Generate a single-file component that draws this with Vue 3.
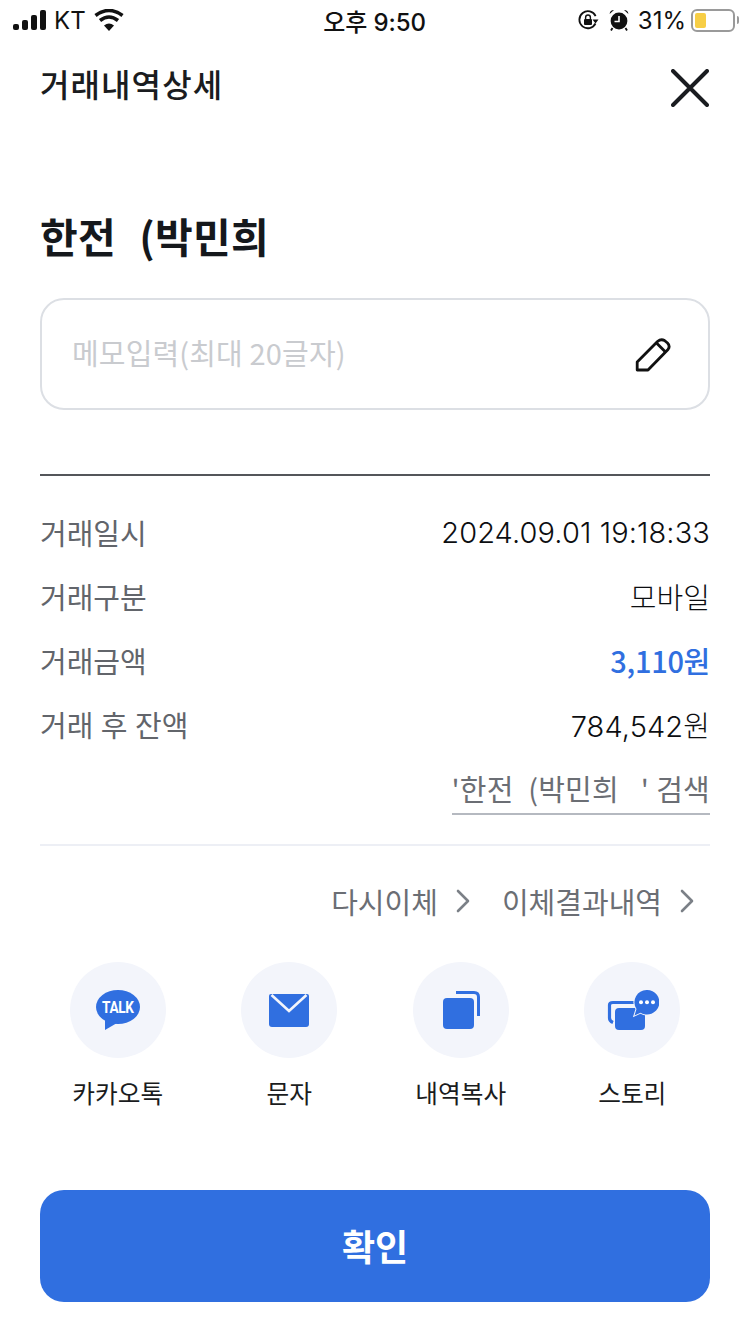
<template>
  <div class="page">
    <div class="status-bar">
      <div class="status-left">
        <svg class="signal" width="34" height="20" viewBox="0 0 34 20">
          <rect x="0" y="14" width="6" height="6" rx="2" />
          <rect x="9" y="10" width="6" height="10" rx="2" />
          <rect x="18" y="5" width="6" height="15" rx="2" />
          <rect x="27" y="0" width="6" height="20" rx="2" />
        </svg>
        <span class="carrier">KT</span>
        <svg class="wifi" width="30" height="22" viewBox="0 0 30 22">
          <path d="M15 22 L10 16.5 Q15 12.5 20 16.5 Z" />
          <path class="wifi-arc" d="M6 11.5 Q15 4.5 24 11.5" />
          <path class="wifi-arc" d="M1.5 6.5 Q15 -3.5 28.5 6.5" />
        </svg>
      </div>
      <div class="status-time">오후 9:50</div>
      <div class="status-right">
        <svg class="rotate-lock" width="22" height="22" viewBox="0 0 22 22">
          <path d="M18.5 14.5 A8.5 8.5 0 1 1 18.6 7.2" fill="none" stroke="#111" stroke-width="1.8" />
          <path d="M15.5 10.5 L21.5 10.5 L18.5 14.5 Z" fill="#111" />
          <rect x="7" y="10" width="8" height="6" rx="1" fill="#111" />
          <path d="M8.6 10 V8.4 A2.4 2.4 0 0 1 13.4 8.4 V10" fill="none" stroke="#111" stroke-width="1.4" />
        </svg>
        <svg class="alarm" width="20" height="22" viewBox="0 0 20 22">
          <circle cx="10" cy="12" r="8.4" fill="#111" />
          <path d="M10 7 V12.5 H5.5" fill="none" stroke="#fff" stroke-width="1.6" />
          <path d="M0.6 5 Q1 1 5 1 Z M19.4 5 Q19 1 15 1 Z" fill="#111" />
          <path d="M3.5 19 L2 21.5 M16.5 19 L18 21.5" stroke="#111" stroke-width="1.8" />
        </svg>
        <span class="battery-text">31%</span>
        <div class="battery">
          <div class="battery-level" :style="{ width: batteryLevel + 'px' }"></div>
        </div>
        <div class="battery-cap"></div>
      </div>
    </div>

    <header class="header">
      <h1 class="header-title">거래내역상세</h1>
      <svg class="close" width="38" height="38" viewBox="0 0 38 38">
        <path d="M2 2 L36 36 M36 2 L2 36" fill="none" stroke="#1a1c20" stroke-width="4" stroke-linecap="round" />
      </svg>
    </header>

    <main class="content">
      <h2 class="name">{{ name }}</h2>

      <div class="memo">
        <span class="memo-placeholder">메모입력(최대 20글자)</span>
        <svg width="38" height="38" viewBox="-2 -2.5 38 38">
          <path d="M1.2 24.5 L21.5 4 Q25 1 28.5 3 L31.5 5.5 Q34.5 8.5 32 12 L12 32.5 L1.2 32.5 Z" fill="none" stroke="#111" stroke-width="2.8" stroke-linejoin="round" />
          <path d="M20.5 5.5 L29.5 14.5" fill="none" stroke="#111" stroke-width="2.8" />
        </svg>
      </div>

      <div class="details">
        <div v-for="row in rows" :key="row.label" class="detail-row">
          <span class="detail-label">{{ row.label }}</span>
          <span class="detail-value" :class="{ 'detail-value--blue': row.blue }">{{ row.value }}</span>
        </div>
        <div class="search-row">
          <span class="search-link">'{{ name }}&nbsp;&nbsp; ' 검색</span>
        </div>
      </div>

      <div class="links">
        <span v-for="link in links" :key="link" class="link">
          {{ link }}
          <svg width="14" height="24" viewBox="0 0 14 24">
            <path d="M2 2 L12 12 L2 22" fill="none" stroke="#7b8087" stroke-width="2.6" stroke-linecap="round" stroke-linejoin="round" />
          </svg>
        </span>
      </div>

      <div class="shares">
        <div class="share">
          <div class="share-circle">
            <svg width="44" height="40" viewBox="0 0 44 40">
              <ellipse cx="22" cy="17" rx="22" ry="17" fill="#306fe0" />
              <path d="M9 26 L9 40 L21 33 Z" fill="#306fe0" />
              <text transform="translate(6 22.8) scale(0.8 1)" class="talk">TALK</text>
            </svg>
          </div>
          <span class="share-label">카카오톡</span>
        </div>
        <div class="share">
          <div class="share-circle">
            <svg width="40" height="33" viewBox="0 0 40 33">
              <path d="M2 0 H38 Q40 0 40 2 V30 Q40 33 37 33 H3 Q0 33 0 30 V2 Q0 0 2 0 Z" fill="#306fe0" />
              <path d="M2.5 1 L20 17 L37.5 1" fill="none" stroke="#f3f5fb" stroke-width="2.6" />
            </svg>
          </div>
          <span class="share-label">문자</span>
        </div>
        <div class="share">
          <div class="share-circle">
            <svg width="38" height="38" viewBox="-1 0 38 38">
              <rect x="0" y="7" width="31" height="31" rx="4" fill="#306fe0" />
              <path d="M13 1.5 H31 Q35.5 1.5 35.5 6 V25" fill="none" stroke="#306fe0" stroke-width="3" />
            </svg>
          </div>
          <span class="share-label">내역복사</span>
        </div>
        <div class="share">
          <div class="share-circle">
            <svg width="54" height="40" viewBox="-3 0 54 40">
              <path d="M5 32.5 Q1.5 31 1.5 28 V15 Q1.5 12.5 5 12.5 H26" fill="none" stroke="#306fe0" stroke-width="3.2" />
              <path d="M7 22 Q7 18 11 18 H33 Q37 18 37 22 V36 Q37 40 33 40 H11 Q7 40 7 36 Z" fill="#306fe0" />
              <path d="M39 0 A12.3 12.3 0 1 1 32.5 22.7 L26.5 25.5 L28.5 19 A12.3 12.3 0 0 1 39 0 Z" fill="#306fe0" stroke="#f3f5fb" stroke-width="2" paint-order="stroke" />
              <circle cx="33" cy="12.3" r="2" fill="#fff" />
              <circle cx="39" cy="12.3" r="2" fill="#fff" />
              <circle cx="45" cy="12.3" r="2" fill="#fff" />
            </svg>
          </div>
          <span class="share-label">스토리</span>
        </div>
      </div>

      <button class="confirm" type="button">확인</button>
    </main>
  </div>
</template>

<script setup>
const batteryLevel = 11;
const name = "한전\u00a0\u00a0(박민희";

const rows = [
  { label: "거래일시", value: "2024.09.01 19:18:33" },
  { label: "거래구분", value: "모바일" },
  { label: "거래금액", value: "3,110원", blue: true },
  { label: "거래 후 잔액", value: "784,542원" },
];

const links = ["다시이체", "이체결과내역"];
</script>

<style>
html,
body {
  background: #fff;
}
</style>

<style scoped>
.page {
  width: 750px;
  height: 1334px;
  overflow: hidden;
  background: #fff;
  font-family: "Noto Sans CJK KR", "Noto Sans", sans-serif;
  color: #1a1c20;
}

/* status bar */
.status-bar {
  height: 40px;
  display: grid;
  grid-template-columns: 1fr auto 1fr;
  align-items: center;
  padding: 0 11px 0 13px;
}

.status-left {
  display: flex;
  align-items: center;
  gap: 7px;
}

.signal {
  fill: #111;
}

.carrier {
  font-family: Inter, sans-serif;
  font-size: 24px;
  color: #111;
}

.wifi {
  margin-left: 1px;
  fill: #111;
}

.wifi-arc {
  fill: none;
  stroke: #111;
  stroke-width: 3.6;
}

.status-time {
  margin-left: -3px;
  font-family: Inter, "Noto Sans CJK KR", sans-serif;
  font-size: 24px;
  font-weight: 550;
  letter-spacing: -0.1px;
  color: #111;
}

.status-right {
  display: flex;
  align-items: center;
  justify-content: flex-end;
  gap: 8px;
}

.rotate-lock {
  margin-right: 2px;
}

.battery-text {
  margin-left: 1px;
  font-family: Inter, sans-serif;
  font-size: 24px;
  color: #111;
}

.battery {
  width: 44px;
  height: 23px;
  box-sizing: border-box;
  border: 2px solid #9a9a9a;
  border-radius: 6px;
  padding: 2px;
  margin-left: -3px;
}

.battery-level {
  height: 100%;
  background: #f7ce46;
  border-radius: 2px;
}

.battery-cap {
  width: 2px;
  height: 8px;
  margin-left: -6px;
  background: #9a9a9a;
  border-radius: 0 2px 2px 0;
}

/* header */
.header {
  height: 90px;
  padding: 0 40px;
  display: flex;
  align-items: flex-start;
  justify-content: space-between;
}

.header-title {
  margin: 15px 0 0;
  font-size: 32px;
  font-weight: 500;
  line-height: 56px;
  letter-spacing: 1.1px;
  color: #1a1c20;
}

.close {
  margin-top: 29px;
  margin-right: 1px;
}

/* content */
.content {
  padding: 0 40px;
}

.name {
  margin: 69px 0 0;
  font-size: 41px;
  font-weight: 700;
  line-height: 72px;
  letter-spacing: 0.3px;
  word-spacing: 2px;
  color: #15181c;
}

.memo {
  margin-top: 27px;
  height: 112px;
  box-sizing: border-box;
  border: 2px solid #dcdfe4;
  border-radius: 24px;
  display: flex;
  align-items: center;
  justify-content: space-between;
  padding: 0 36px 0 30px;
}

.memo-placeholder {
  position: relative;
  top: -2px;
  font-size: 29px;
  letter-spacing: 0.15px;
  color: #c9cbcf;
}

.details {
  margin-top: 64px;
  border-top: 2px solid #54565a;
  padding-top: 24px;
  border-bottom: 2px solid #edeff5;
  padding-bottom: 29px;
}

.detail-row {
  height: 64px;
  display: flex;
  align-items: center;
  justify-content: space-between;
  font-size: 29px;
}

.detail-label {
  word-spacing: 1px;
  color: #62656b;
}

.detail-value {
  font-family: Inter, "Noto Sans CJK KR", sans-serif;
  font-weight: 300;
  letter-spacing: 0.1px;
  color: #0c0e11;
}

.detail-value--blue {
  font-family: "Noto Sans CJK KR", sans-serif;
  font-weight: 500;
  letter-spacing: -0.3px;
  color: #306fe0;
}

.search-row {
  display: flex;
  justify-content: flex-end;
  margin-top: 11px;
}

.search-link {
  height: 48px;
  line-height: 43px;
  box-sizing: border-box;
  border-bottom: 2px solid #b5b9c0;
  font-size: 29px;
  letter-spacing: 0.2px;
  word-spacing: 0.6px;
  color: #6b6e74;
}

.links {
  display: flex;
  justify-content: flex-end;
  gap: 32px;
  margin-top: 33px;
  padding-right: 16px;
}

.link {
  display: flex;
  align-items: center;
  gap: 18px;
  font-size: 29px;
  line-height: 44px;
  color: #6b6e74;
}

.shares {
  margin-top: 39px;
  display: grid;
  grid-template-columns: repeat(4, 171.5px);
  margin-left: -8px;
}

.share {
  display: flex;
  flex-direction: column;
  align-items: center;
  gap: 12px;
}

.share-circle {
  width: 96px;
  height: 96px;
  border-radius: 50%;
  background: #f3f5fb;
  display: flex;
  align-items: center;
  justify-content: center;
}

.share-label {
  font-size: 24.7px;
  line-height: 44px;
  color: #1a1c20;
}

.talk {
  font-family: Roboto, sans-serif;
  font-size: 17px;
  font-weight: 700;
  letter-spacing: -0.4px;
  fill: #fff;
}

.confirm {
  display: block;
  width: 100%;
  height: 112px;
  margin-top: 76px;
  padding: 0 0 3px;
  border: none;
  border-radius: 24px;
  background: #306fe0;
  color: #fff;
  font-family: inherit;
  font-size: 36px;
  font-weight: 700;
}
</style>
